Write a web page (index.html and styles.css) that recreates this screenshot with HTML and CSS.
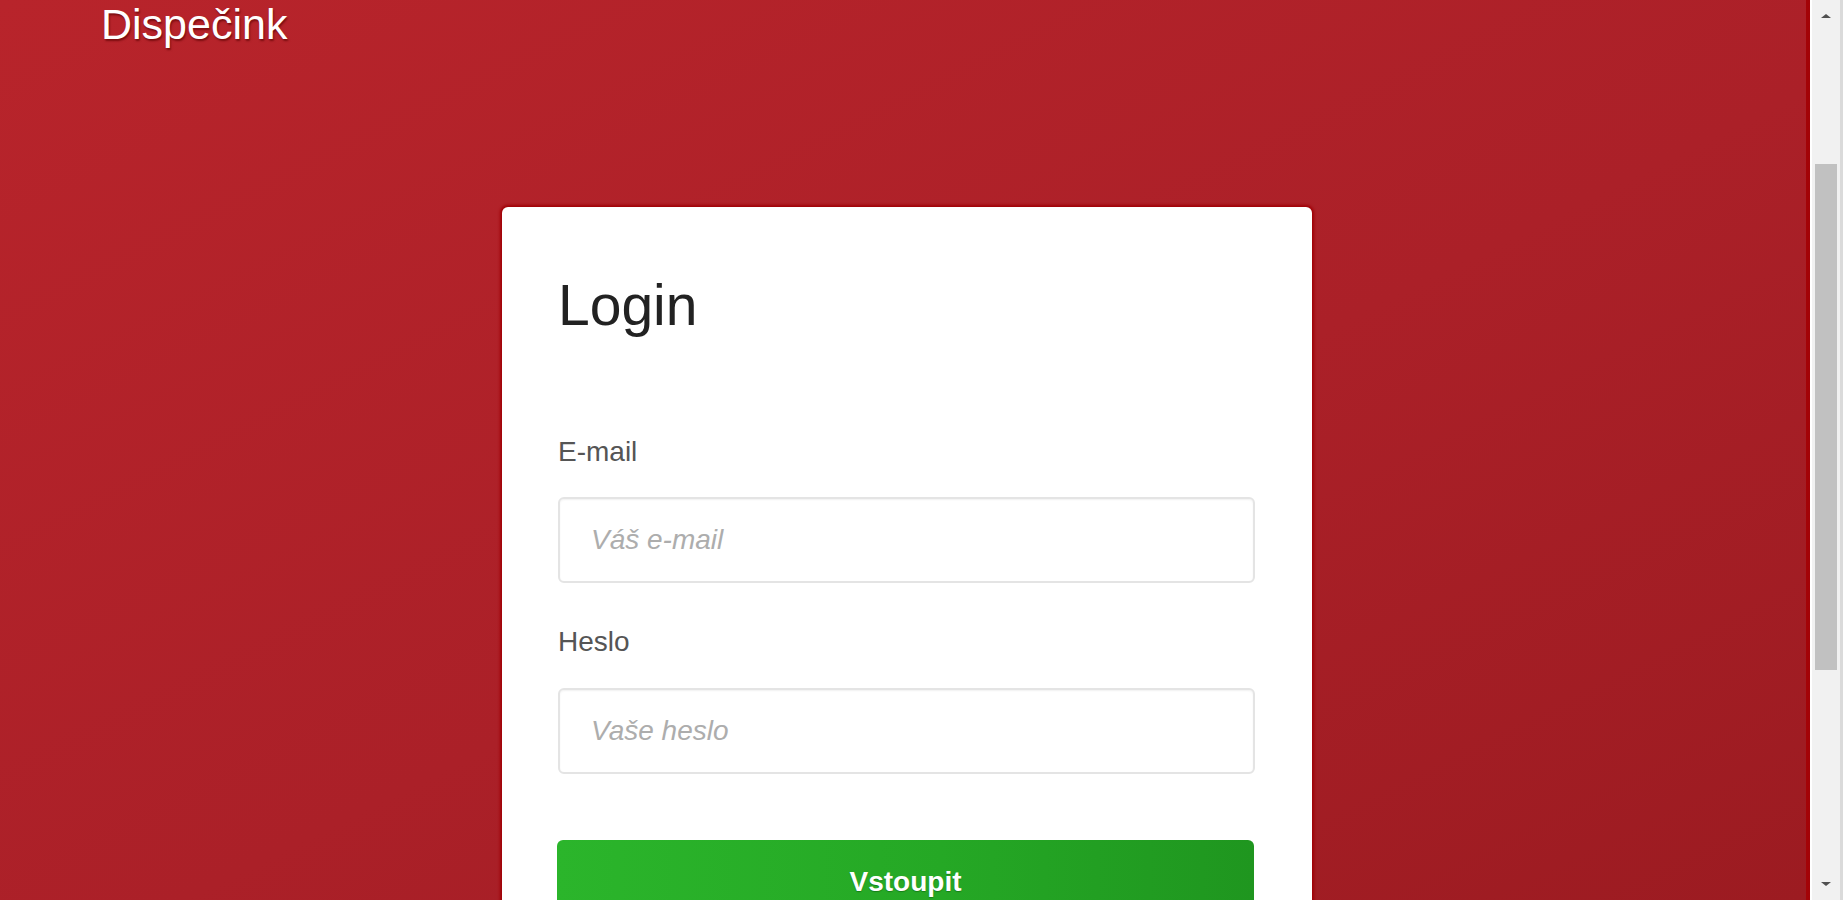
FILE: index.html
```html
<!DOCTYPE html>
<html lang="cs">
<head>
<meta charset="utf-8">
<title>Dispečink – Login</title>
<link rel="stylesheet" href="styles.css">
</head>
<body>
<div class="page">
  <main class="main">
    <header class="header">
      <span class="brand">Dispečink</span>
    </header>
    <div class="stage">
      <form class="card">
        <h1 class="title">Login</h1>
        <label class="label label-first" for="email">E-mail</label>
        <input class="field" id="email" type="text" placeholder="Váš e-mail">
        <label class="label" for="heslo">Heslo</label>
        <input class="field field-second" id="heslo" type="password" placeholder="Vaše heslo">
        <button class="btn" type="button">Vstoupit</button>
      </form>
    </div>
  </main>
  <div class="scrollbar">
    <div class="sb-btn"><span class="arrow-up"></span></div>
    <div class="sb-gap"></div>
    <div class="sb-thumb"></div>
    <div class="sb-fill"></div>
    <div class="sb-btn"><span class="arrow-down"></span></div>
  </div>
</div>
</body>
</html>
```
FILE: styles.css
```css
html, body {
  margin: 0;
  padding: 0;
  height: 100%;
  overflow: hidden;
}

body {
  font-family: "Liberation Sans", Arial, sans-serif;
}

.page {
  display: flex;
  height: 900px;
  overflow: hidden;
}

.main {
  flex: 1;
  display: flex;
  flex-direction: column;
  background: linear-gradient(to bottom right, #b8242b 0%, #ab2028 55%, #9c1b21 100%);
  border-right: 4px solid #a30307;
  overflow: hidden;
}

.header {
  padding: 3px 0 0 101px;
  height: 42px;
}

.brand {
  display: block;
  color: #ffffff;
  font-size: 43px;
  line-height: 42px;
  text-shadow: 1px 2px 2px rgba(90, 0, 0, 0.65);
}

.stage {
  display: flex;
  justify-content: center;
  padding: 162px 0 0 8px;
}

.card {
  width: 810px;
  box-sizing: border-box;
  background: #ffffff;
  border-radius: 6px;
  padding: 70px 57px 60px 56px;
  box-shadow: 0 0 3px 2px #a00006;
  display: flex;
  flex-direction: column;
}

.title {
  margin: 0;
  font-size: 57px;
  line-height: 57px;
  font-weight: normal;
  color: #222222;
}

.label {
  display: block;
  margin-top: 45px;
  font-size: 28px;
  line-height: 28px;
  color: #555555;
}

.label-first {
  margin-top: 104px;
}

.field {
  display: block;
  margin-top: 31px;
  height: 86px;
  width: 100%;
  box-sizing: border-box;
  border: 2px solid #e4e4e4;
  border-radius: 6px;
  padding: 0 20px 0 31px;
  font-family: "Liberation Sans", Arial, sans-serif;
  font-size: 28px;
  color: #333333;
  background: #ffffff;
  box-shadow: inset 0 1px 2px rgba(0, 0, 0, 0.06);
  outline: none;
}

.field-second {
  margin-top: 32px;
}

.field::placeholder {
  color: #adadad;
  font-style: italic;
}

.btn {
  margin-top: 66px;
  margin-left: -1px;
  height: 90px;
  width: 100%;
  border: none;
  border-radius: 6px;
  background: linear-gradient(to right, #2bb52b 0%, #25a825 55%, #1f961f 100%);
  color: #ffffff;
  font-family: "Liberation Sans", Arial, sans-serif;
  font-size: 28px;
  font-weight: bold;
  text-align: center;
  padding: 0 0 6px 0;
  text-shadow: 0 1px 1px rgba(0, 60, 0, 0.4);
  cursor: pointer;
}

.scrollbar {
  width: 28px;
  flex: none;
  display: flex;
  flex-direction: column;
  background: #f1f1f1;
  border-left: 2px solid #ffffff;
  border-right: 3px solid #dadada;
}

.sb-btn {
  height: 32px;
  display: flex;
  align-items: center;
  justify-content: center;
  flex: none;
}

.arrow-up {
  width: 0;
  height: 0;
  border-left: 5px solid transparent;
  border-right: 5px solid transparent;
  border-bottom: 4px solid #505050;
}

.arrow-down {
  width: 0;
  height: 0;
  border-left: 5px solid transparent;
  border-right: 5px solid transparent;
  border-top: 4px solid #505050;
}

.sb-gap {
  height: 132px;
  flex: none;
}

.sb-thumb {
  height: 506px;
  margin: 0 3px;
  background: #c1c1c1;
  flex: none;
}

.sb-fill {
  flex: 1;
}
```
